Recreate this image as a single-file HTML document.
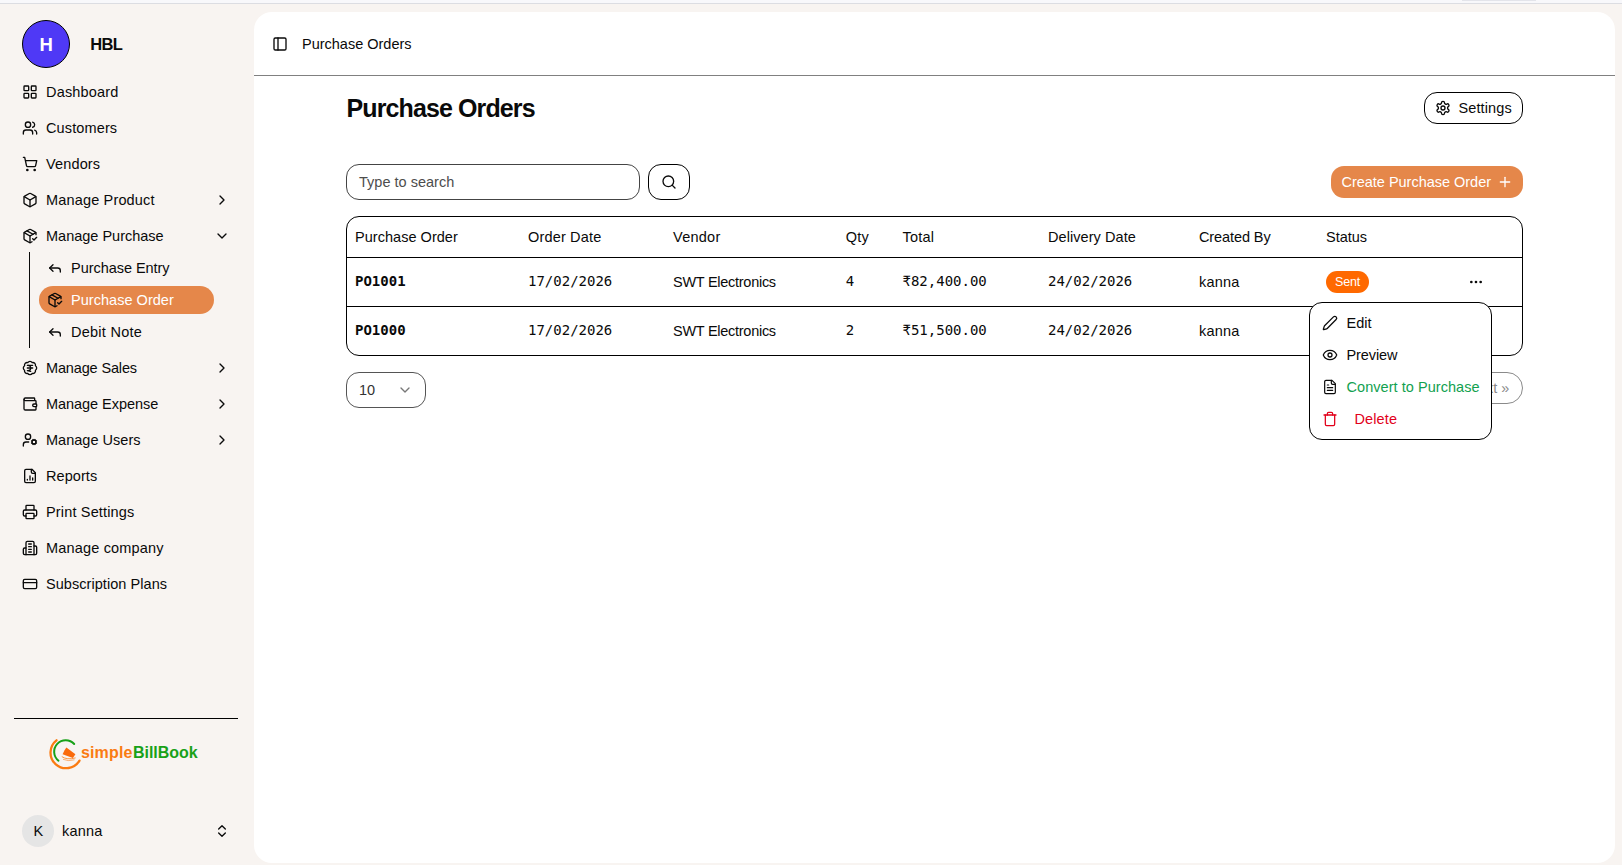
<!DOCTYPE html>
<html lang="en"><head><meta charset="utf-8"><title>Purchase Orders</title>
<style>
*{box-sizing:border-box;margin:0;padding:0}
html,body{width:1622px;height:865px;overflow:hidden}
body{position:relative;background:#f8f4f1;font-family:"Liberation Sans", sans-serif;color:#0a0a0a}
.t{position:absolute;white-space:nowrap;line-height:20px;font-size:14.5px}
.i{position:absolute;fill:none;stroke:currentColor;stroke-linecap:round;stroke-linejoin:round;color:#0a0a0a;overflow:visible}
.logo{position:absolute;overflow:visible}
.strip{position:absolute;left:0;top:0;width:1622px;height:3px;background:#f8f8fb}
.stripline{position:absolute;left:0;top:3px;width:1622px;height:1px;background:#dcdde2}
.striptab{position:absolute;left:1462px;top:0;width:74px;height:1px;background:#e3e4ea}
.avatar{position:absolute;left:22px;top:20px;width:48px;height:48px;border-radius:50%;background:#4f39f6;border:1px solid #000}
.subline{position:absolute;left:29px;top:252px;width:1px;height:96px;background:#0a0a0a}
.pill{position:absolute;left:39px;top:286px;width:175px;height:28px;border-radius:14px;background:#e5874a}
.sdiv{position:absolute;left:14px;top:717.5px;width:223.5px;height:1.2px;background:#000}
.uav{position:absolute;left:22px;top:815px;width:32px;height:32px;border-radius:50%;background:#e5e5e5}
.panel{position:absolute;left:254px;top:12px;width:1361px;height:851px;border-radius:18px;background:#fff}
.hline{position:absolute;left:254px;top:75px;width:1361px;height:1px;background:#808080}
.btn-o{position:absolute;border:1px solid #000;background:#fff}
.btn-f{position:absolute;background:#e5874a}
.table{position:absolute;left:346px;top:216px;width:1177px;height:140px;border:1px solid #000;border-radius:13px}
.tl{position:absolute;left:346px;width:1177px;height:1px;background:#000}
.badge{position:absolute;left:1326px;top:271px;width:43px;height:22px;border-radius:11px;background:#ff6900}
.dd{position:absolute;left:1309px;top:302px;width:183px;height:138px;border-radius:13px;border:1px solid #000;background:#fff}
</style></head>
<body>
<div class="strip"></div><div class="stripline"></div><div class="striptab"></div>
<div class="avatar"></div>
<span class="t" style="left:39.50px;top:34.89px;font-size:18.5px;font-weight:700;letter-spacing:-1.175px;color:#fff;">H</span>
<span class="t" style="left:90.30px;top:34.28px;font-size:16.5px;font-weight:700;letter-spacing:-0.698px;">HBL</span>
<svg class="i" x="0" y="0" width="16" height="16" viewBox="0 0 24 24" stroke-width="2" style="left:22px;top:84px;"><rect width="7" height="7" x="3" y="3" rx="1"/><rect width="7" height="7" x="14" y="3" rx="1"/><rect width="7" height="7" x="14" y="14" rx="1"/><rect width="7" height="7" x="3" y="14" rx="1"/></svg>
<span class="t" style="left:46.00px;top:81.98px;font-size:14.5px;letter-spacing:0.172px;">Dashboard</span>
<svg class="i" x="0" y="0" width="16" height="16" viewBox="0 0 24 24" stroke-width="2" style="left:22px;top:120px;"><path d="M16 21v-2a4 4 0 0 0-4-4H6a4 4 0 0 0-4 4v2"/><circle cx="9" cy="7" r="4"/><path d="M22 21v-2a4 4 0 0 0-3-3.87"/><path d="M16 3.13a4 4 0 0 1 0 7.75"/></svg>
<span class="t" style="left:46.00px;top:117.98px;font-size:14.5px;letter-spacing:0.123px;">Customers</span>
<svg class="i" x="0" y="0" width="16" height="16" viewBox="0 0 24 24" stroke-width="2" style="left:22px;top:156px;"><circle cx="8" cy="21" r="1"/><circle cx="19" cy="21" r="1"/><path d="M2.05 2.05h2l2.66 12.42a2 2 0 0 0 2 1.58h9.78a2 2 0 0 0 1.95-1.57l1.65-7.43H5.12"/></svg>
<span class="t" style="left:46.00px;top:153.98px;font-size:14.5px;letter-spacing:0.147px;">Vendors</span>
<svg class="i" x="0" y="0" width="16" height="16" viewBox="0 0 24 24" stroke-width="2" style="left:22px;top:192px;"><path d="M21 8a2 2 0 0 0-1-1.73l-7-4a2 2 0 0 0-2 0l-7 4A2 2 0 0 0 3 8v8a2 2 0 0 0 1 1.73l7 4a2 2 0 0 0 2 0l7-4A2 2 0 0 0 21 16Z"/><path d="m3.3 7 8.7 5 8.7-5"/><path d="M12 22V12"/></svg>
<span class="t" style="left:46.00px;top:189.98px;font-size:14.5px;letter-spacing:0.163px;">Manage Product</span>
<svg class="i" x="0" y="0" width="16" height="16" viewBox="0 0 24 24" stroke-width="2" style="left:214px;top:192px;"><path d="m9 18 6-6-6-6"/></svg>
<svg class="i" x="0" y="0" width="16" height="16" viewBox="0 0 24 24" stroke-width="2" style="left:22px;top:228px;"><path d="m16 16 2 2 4-4"/><path d="M21 10V8a2 2 0 0 0-1-1.73l-7-4a2 2 0 0 0-2 0l-7 4A2 2 0 0 0 3 8v8a2 2 0 0 0 1 1.73l7 4a2 2 0 0 0 2 0l2-1.14"/><path d="m7.5 4.27 9 5.15"/><polyline points="3.29 7 12 12 20.71 7"/><line x1="12" x2="12" y1="22" y2="12"/></svg>
<span class="t" style="left:46.00px;top:225.98px;font-size:14.5px;">Manage Purchase</span>
<svg class="i" x="0" y="0" width="16" height="16" viewBox="0 0 24 24" stroke-width="2" style="left:214px;top:228px;"><path d="m6 9 6 6 6-6"/></svg>
<svg class="i" x="0" y="0" width="16" height="16" viewBox="0 0 24 24" stroke-width="2" style="left:22px;top:360px;"><path d="M3.85 8.62a4 4 0 0 1 4.78-4.77 4 4 0 0 1 6.74 0 4 4 0 0 1 4.78 4.78 4 4 0 0 1 0 6.74 4 4 0 0 1-4.77 4.78 4 4 0 0 1-6.75 0 4 4 0 0 1-4.78-4.77 4 4 0 0 1 0-6.76Z"/><path d="M8 8h8"/><path d="M8 12h8"/><path d="m13 17-5-1h1a4 4 0 0 0 0-8"/></svg>
<span class="t" style="left:46.00px;top:357.98px;font-size:14.5px;letter-spacing:-0.145px;">Manage Sales</span>
<svg class="i" x="0" y="0" width="16" height="16" viewBox="0 0 24 24" stroke-width="2" style="left:214px;top:360px;"><path d="m9 18 6-6-6-6"/></svg>
<svg class="i" x="0" y="0" width="16" height="16" viewBox="0 0 24 24" stroke-width="2" style="left:22px;top:396px;"><path d="M19 7V4a1 1 0 0 0-1-1H5a2 2 0 0 0 0 4h15a1 1 0 0 1 1 1v4h-3a2 2 0 0 0 0 4h3a1 1 0 0 0 1-1v-2a1 1 0 0 0-1-1"/><path d="M3 5v14a2 2 0 0 0 2 2h15a1 1 0 0 0 1-1v-4"/></svg>
<span class="t" style="left:46.00px;top:393.98px;font-size:14.5px;letter-spacing:-0.050px;">Manage Expense</span>
<svg class="i" x="0" y="0" width="16" height="16" viewBox="0 0 24 24" stroke-width="2" style="left:214px;top:396px;"><path d="m9 18 6-6-6-6"/></svg>
<svg class="i" x="0" y="0" width="16" height="16" viewBox="0 0 24 24" stroke-width="2" style="left:22px;top:432px;"><path d="M10 15H6a4 4 0 0 0-4 4v2"/><path d="m14.305 16.53.923-.382"/><path d="m15.228 13.852-.923-.383"/><path d="m16.852 12.228-.383-.923"/><path d="m16.852 17.772-.383.924"/><path d="m19.148 12.228.383-.923"/><path d="m19.53 18.696-.382-.924"/><path d="m20.772 13.852.924-.383"/><path d="m20.772 16.148.924.383"/><circle cx="18" cy="15" r="3"/><circle cx="9" cy="7" r="4"/></svg>
<span class="t" style="left:46.00px;top:429.98px;font-size:14.5px;letter-spacing:0.020px;">Manage Users</span>
<svg class="i" x="0" y="0" width="16" height="16" viewBox="0 0 24 24" stroke-width="2" style="left:214px;top:432px;"><path d="m9 18 6-6-6-6"/></svg>
<svg class="i" x="0" y="0" width="16" height="16" viewBox="0 0 24 24" stroke-width="2" style="left:22px;top:468px;"><path d="M15 2H6a2 2 0 0 0-2 2v16a2 2 0 0 0 2 2h12a2 2 0 0 0 2-2V7Z"/><path d="M14 2v4a2 2 0 0 0 2 2h4"/><path d="M8 18v-1"/><path d="M12 18v-6"/><path d="M16 18v-3"/></svg>
<span class="t" style="left:46.00px;top:465.98px;font-size:14.5px;letter-spacing:0.065px;">Reports</span>
<svg class="i" x="0" y="0" width="16" height="16" viewBox="0 0 24 24" stroke-width="2" style="left:22px;top:504px;"><path d="M6 18H4a2 2 0 0 1-2-2v-5a2 2 0 0 1 2-2h16a2 2 0 0 1 2 2v5a2 2 0 0 1-2 2h-2"/><path d="M6 9V3a1 1 0 0 1 1-1h10a1 1 0 0 1 1 1v6"/><rect x="6" y="14" width="12" height="8" rx="1"/></svg>
<span class="t" style="left:46.00px;top:501.98px;font-size:14.5px;letter-spacing:0.160px;">Print Settings</span>
<svg class="i" x="0" y="0" width="16" height="16" viewBox="0 0 24 24" stroke-width="2" style="left:22px;top:540px;"><path d="M6 22V4a2 2 0 0 1 2-2h8a2 2 0 0 1 2 2v18Z"/><path d="M6 12H4a2 2 0 0 0-2 2v6a2 2 0 0 0 2 2h2"/><path d="M18 9h2a2 2 0 0 1 2 2v9a2 2 0 0 1-2 2h-2"/><path d="M10 6h4"/><path d="M10 10h4"/><path d="M10 14h4"/><path d="M10 18h4"/></svg>
<span class="t" style="left:46.00px;top:537.98px;font-size:14.5px;letter-spacing:0.177px;">Manage company</span>
<svg class="i" x="0" y="0" width="16" height="16" viewBox="0 0 24 24" stroke-width="2" style="left:22px;top:576px;"><rect width="20" height="14" x="2" y="5" rx="2"/><line x1="2" x2="22" y1="10" y2="10"/></svg>
<span class="t" style="left:46.00px;top:573.98px;font-size:14.5px;letter-spacing:0.056px;">Subscription Plans</span>
<div class="subline"></div>
<div class="pill"></div>
<svg class="i" x="0" y="0" width="16" height="16" viewBox="0 0 24 24" stroke-width="2" style="left:47px;top:260px;"><polyline points="9 17 4 12 9 7"/><path d="M20 18v-2a4 4 0 0 0-4-4H4"/></svg>
<span class="t" style="left:71.00px;top:257.98px;font-size:14.5px;letter-spacing:-0.045px;">Purchase Entry</span>
<svg class="i" x="0" y="0" width="16" height="16" viewBox="0 0 24 24" stroke-width="2" style="left:47px;top:292px;"><path d="m16 16 2 2 4-4"/><path d="M21 10V8a2 2 0 0 0-1-1.73l-7-4a2 2 0 0 0-2 0l-7 4A2 2 0 0 0 3 8v8a2 2 0 0 0 1 1.73l7 4a2 2 0 0 0 2 0l2-1.14"/><path d="m7.5 4.27 9 5.15"/><polyline points="3.29 7 12 12 20.71 7"/><line x1="12" x2="12" y1="22" y2="12"/></svg>
<span class="t" style="left:71.00px;top:289.98px;font-size:14.5px;letter-spacing:0.033px;color:#fff;">Purchase Order</span>
<svg class="i" x="0" y="0" width="16" height="16" viewBox="0 0 24 24" stroke-width="2" style="left:47px;top:324px;"><polyline points="9 17 4 12 9 7"/><path d="M20 18v-2a4 4 0 0 0-4-4H4"/></svg>
<span class="t" style="left:71.00px;top:321.98px;font-size:14.5px;letter-spacing:0.258px;">Debit Note</span>
<div class="sdiv"></div>
<svg class="logo" width="50" height="48" viewBox="40 730 50 48" style="left:40px;top:730px"><path d="M56.5 740.3 A15.6 15.6 0 1 0 79.5 760.6" fill="none" stroke="#fa7b12" stroke-width="2.3" stroke-linecap="round"/><path d="M74.2 744 A11.5 11.5 0 1 0 58.5 760.7" fill="none" stroke="#18a118" stroke-width="2" stroke-linecap="round"/><path d="M66.4 747.4 L75.4 754.3 L72.9 757.9 L62.6 754.2 L64.4 750.4 Z" fill="#fa6a0a"/><path d="M61.8 756.6 Q67 760.2 75.6 757.9" fill="none" stroke="#fa7b12" stroke-width="0.8"/><path d="M63 759.3 Q68 761.6 74.5 759.8" fill="none" stroke="#fa7b12" stroke-width="0.6"/></svg>
<span class="t" style="left:81.00px;top:742.96px;font-size:16px;font-weight:700;letter-spacing:0.135px;color:#fa7b12;">simple</span>
<span class="t" style="left:133.00px;top:742.96px;font-size:16px;font-weight:700;letter-spacing:-0.036px;color:#18a118;">BillBook</span>
<div class="uav"></div>
<span class="t" style="left:33.60px;top:820.68px;font-size:14.5px;letter-spacing:-1.000px;">K</span>
<span class="t" style="left:62.00px;top:820.68px;font-size:14.5px;letter-spacing:0.197px;">kanna</span>
<svg class="i" x="0" y="0" width="16" height="16" viewBox="0 0 24 24" stroke-width="2" style="left:214px;top:823px;"><path d="m7 15 5 5 5-5"/><path d="m7 9 5-5 5 5"/></svg>
<div class="panel"></div>
<svg class="i" x="0" y="0" width="16" height="16" viewBox="0 0 24 24" stroke-width="2" style="left:272px;top:36px;"><rect width="18" height="18" x="3" y="3" rx="2"/><path d="M9 3v18"/></svg>
<span class="t" style="left:302.00px;top:33.98px;font-size:14.5px;letter-spacing:-0.005px;">Purchase Orders</span>
<div class="hline"></div>
<span class="t h1" style="left:346.50px;top:98.34px;font-size:25px;font-weight:700;letter-spacing:-0.884px;">Purchase Orders</span>
<div class="btn-o" style="left:1424px;top:92px;width:99px;height:32px;border-radius:13px"></div>
<svg class="i" x="0" y="0" width="16" height="16" viewBox="0 0 24 24" stroke-width="2" style="left:1435px;top:100px;"><path d="M12.22 2h-.44a2 2 0 0 0-2 2v.18a2 2 0 0 1-1 1.73l-.43.25a2 2 0 0 1-2 0l-.15-.08a2 2 0 0 0-2.73.73l-.22.38a2 2 0 0 0 .73 2.73l.15.1a2 2 0 0 1 1 1.72v.51a2 2 0 0 1-1 1.74l-.15.09a2 2 0 0 0-.73 2.73l.22.38a2 2 0 0 0 2.73.73l.15-.08a2 2 0 0 1 2 0l.43.25a2 2 0 0 1 1 1.73V20a2 2 0 0 0 2 2h.44a2 2 0 0 0 2-2v-.18a2 2 0 0 1 1-1.73l.43-.25a2 2 0 0 1 2 0l.15.08a2 2 0 0 0 2.73-.73l.22-.39a2 2 0 0 0-.73-2.73l-.15-.08a2 2 0 0 1-1-1.74v-.5a2 2 0 0 1 1-1.74l.15-.09a2 2 0 0 0 .73-2.73l-.22-.38a2 2 0 0 0-2.73-.73l-.15.08a2 2 0 0 1-2 0l-.43-.25a2 2 0 0 1-1-1.73V4a2 2 0 0 0-2-2z"/><circle cx="12" cy="12" r="3"/></svg>
<span class="t" style="left:1458.50px;top:97.98px;font-size:14.5px;letter-spacing:0.109px;">Settings</span>
<div class="btn-o" style="left:346px;top:164px;width:294px;height:36px;border-radius:13px;border-color:#444"></div>
<span class="t" style="left:359.00px;top:172.28px;font-size:14.5px;letter-spacing:0.013px;color:#4d4d4d;">Type to search</span>
<div class="btn-o" style="left:648px;top:164px;width:42px;height:36px;border-radius:13px;border-width:1.5px"></div>
<svg class="i" x="0" y="0" width="16" height="16" viewBox="0 0 24 24" stroke-width="2" style="left:661px;top:174px;"><circle cx="11" cy="11" r="8"/><path d="m21 21-4.3-4.3"/></svg>
<div class="btn-f" style="left:1331px;top:166px;width:192px;height:32px;border-radius:13px"></div>
<span class="t" style="left:1341.50px;top:171.98px;font-size:14.5px;letter-spacing:-0.019px;color:#fff;">Create Purchase Order</span>
<svg class="i" x="0" y="0" width="16" height="16" viewBox="0 0 24 24" stroke-width="2" style="left:1497px;top:174px;color:#fff;"><path d="M5 12h14"/><path d="M12 5v14"/></svg>
<div class="btn-o" style="left:1440px;top:372px;width:83px;height:32px;border-radius:16px;border-color:#8a8a8a"></div>
<span class="t" style="left:1467.70px;top:377.98px;font-size:14.5px;letter-spacing:-0.073px;color:#8a8a8a;">Next »</span>
<div class="table"></div><div class="tl" style="top:257px"></div><div class="tl" style="top:306px"></div>
<span class="t" style="left:355.00px;top:226.68px;font-size:14.5px;letter-spacing:0.033px;">Purchase Order</span>
<span class="t" style="left:528.00px;top:226.68px;font-size:14.5px;letter-spacing:0.166px;">Order Date</span>
<span class="t" style="left:673.00px;top:226.68px;font-size:14.5px;letter-spacing:0.260px;">Vendor</span>
<span class="t" style="left:845.70px;top:226.68px;font-size:14.5px;letter-spacing:0.193px;">Qty</span>
<span class="t" style="left:902.50px;top:226.68px;font-size:14.5px;letter-spacing:0.231px;">Total</span>
<span class="t" style="left:1048.00px;top:226.68px;font-size:14.5px;letter-spacing:0.070px;">Delivery Date</span>
<span class="t" style="left:1199.00px;top:226.68px;font-size:14.5px;letter-spacing:-0.100px;">Created By</span>
<span class="t" style="left:1326.00px;top:226.68px;font-size:14.5px;letter-spacing:-0.016px;">Status</span>
<span class="t" style="left:355.00px;top:271.15px;font-size:14px;font-weight:700;font-family:'DejaVu Sans Mono', 'Liberation Mono', monospace;">PO1001</span>
<span class="t" style="left:528.00px;top:271.15px;font-size:14px;font-family:'DejaVu Sans Mono', 'Liberation Mono', monospace;">17/02/2026</span>
<span class="t" style="left:673.00px;top:271.68px;font-size:14.5px;letter-spacing:-0.270px;">SWT Electronics</span>
<span class="t" style="left:845.70px;top:271.15px;font-size:14px;font-family:'DejaVu Sans Mono', 'Liberation Mono', monospace;">4</span>
<span class="t" style="left:902.50px;top:271.15px;font-size:14px;font-family:'DejaVu Sans Mono', 'Liberation Mono', monospace;">₹82,400.00</span>
<span class="t" style="left:1048.00px;top:271.15px;font-size:14px;font-family:'DejaVu Sans Mono', 'Liberation Mono', monospace;">24/02/2026</span>
<span class="t" style="left:1199.00px;top:271.68px;font-size:14.5px;letter-spacing:0.197px;">kanna</span>
<span class="t" style="left:355.00px;top:320.15px;font-size:14px;font-weight:700;font-family:'DejaVu Sans Mono', 'Liberation Mono', monospace;">PO1000</span>
<span class="t" style="left:528.00px;top:320.15px;font-size:14px;font-family:'DejaVu Sans Mono', 'Liberation Mono', monospace;">17/02/2026</span>
<span class="t" style="left:673.00px;top:320.68px;font-size:14.5px;letter-spacing:-0.270px;">SWT Electronics</span>
<span class="t" style="left:845.70px;top:320.15px;font-size:14px;font-family:'DejaVu Sans Mono', 'Liberation Mono', monospace;">2</span>
<span class="t" style="left:902.50px;top:320.15px;font-size:14px;font-family:'DejaVu Sans Mono', 'Liberation Mono', monospace;">₹51,500.00</span>
<span class="t" style="left:1048.00px;top:320.15px;font-size:14px;font-family:'DejaVu Sans Mono', 'Liberation Mono', monospace;">24/02/2026</span>
<span class="t" style="left:1199.00px;top:320.68px;font-size:14.5px;letter-spacing:0.197px;">kanna</span>
<div class="badge"></div>
<span class="t" style="left:1335.00px;top:271.67px;font-size:12.5px;letter-spacing:-0.152px;color:#fff;">Sent</span>
<svg class="i" x="0" y="0" width="16" height="16" viewBox="0 0 24 24" stroke-width="2" style="left:1468px;top:274px;"><circle cx="12" cy="12" r="1"/><circle cx="19" cy="12" r="1"/><circle cx="5" cy="12" r="1"/></svg>
<div class="btn-o" style="left:346px;top:372px;width:80px;height:36px;border-radius:13px;border-color:#555"></div>
<span class="t" style="left:359.00px;top:379.98px;font-size:14.5px;letter-spacing:-0.055px;color:#333;">10</span>
<svg class="i" x="0" y="0" width="16" height="16" viewBox="0 0 24 24" stroke-width="2" style="left:397px;top:382px;color:#777;"><path d="m6 9 6 6 6-6"/></svg>
<div class="dd"></div>
<svg class="i" x="0" y="0" width="16" height="16" viewBox="0 0 24 24" stroke-width="1.9" style="left:1322px;top:315px;"><path d="M21.174 6.812a1 1 0 0 0-3.986-3.987L3.842 16.174a2 2 0 0 0-.5.83l-1.321 4.352a.5.5 0 0 0 .623.622l4.353-1.32a2 2 0 0 0 .83-.497z"/></svg>
<span class="t" style="left:1346.50px;top:312.98px;font-size:14.5px;letter-spacing:0.016px;">Edit</span>
<svg class="i" x="0" y="0" width="16" height="16" viewBox="0 0 24 24" stroke-width="1.9" style="left:1322px;top:347px;"><path d="M2.062 12.348a1 1 0 0 1 0-.696 10.75 10.75 0 0 1 19.876 0 1 1 0 0 1 0 .696 10.75 10.75 0 0 1-19.876 0"/><circle cx="12" cy="12" r="3"/></svg>
<span class="t" style="left:1346.50px;top:344.98px;font-size:14.5px;letter-spacing:-0.092px;">Preview</span>
<svg class="i" x="0" y="0" width="16" height="16" viewBox="0 0 24 24" stroke-width="1.8" style="left:1322px;top:379px;"><path d="M15 2H6a2 2 0 0 0-2 2v16a2 2 0 0 0 2 2h12a2 2 0 0 0 2-2V7Z"/><path d="M14 2v4a2 2 0 0 0 2 2h4"/><path d="M10 9H8"/><path d="M16 13H8"/><path d="M16 17H8"/></svg>
<span class="t" style="left:1346.50px;top:376.98px;font-size:14.5px;letter-spacing:0.047px;color:#12a150;">Convert to Purchase</span>
<svg class="i" x="0" y="0" width="16" height="16" viewBox="0 0 24 24" stroke-width="1.9" style="left:1322px;top:411px;color:#e2001a;"><path d="M3 6h18"/><path d="M19 6v14c0 1-1 2-2 2H7c-1 0-2-1-2-2V6"/><path d="M8 6V4c0-1 1-2 2-2h4c1 0 2 1 2 2v2"/></svg>
<span class="t" style="left:1354.50px;top:408.98px;font-size:14.5px;letter-spacing:0.109px;color:#e2001a;">Delete</span>
</body></html>
